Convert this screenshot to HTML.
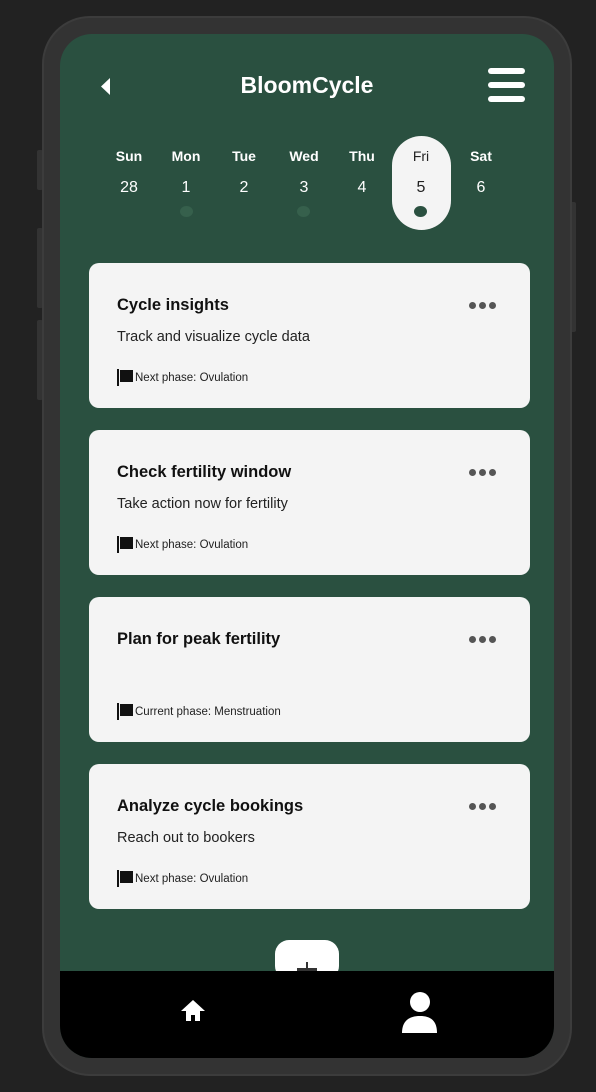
<!DOCTYPE html>
<html><head><meta charset="utf-8"><style>
*{margin:0;padding:0;box-sizing:border-box}
body{width:596px;height:1092px;background:#222;position:relative;overflow:hidden;font-family:"Liberation Sans",sans-serif}
.abs{position:absolute}
.frame{left:42px;top:16px;width:530px;height:1060px;background:#333;border-radius:48px;border:2px solid #3c3c3c}
.btn{background:#333}
.screen{left:60px;top:34px;width:494px;height:1024px;background:#2a5040;border-radius:32px;overflow:hidden}
.title{left:0;width:494px;top:38px;text-align:center;color:#fff;font-weight:bold;font-size:23px}
.day{width:60px;text-align:center;color:#fff;}
.day .l{position:absolute;top:114px;width:60px;font-size:14px;font-weight:bold}
.day .n{position:absolute;top:145px;width:60px;font-size:16px}
.dot{width:13px;height:11px;border-radius:50%;background:#36604c}
.card{left:29px;width:441px;height:145px;background:#f4f4f4;border-radius:10px}
.card h3{position:absolute;left:28px;top:33px;font-size:16.5px;font-weight:bold;color:#111}
.card p{position:absolute;left:28px;top:66px;font-size:14.5px;color:#222}
.card .f{position:absolute;left:28px;top:106px;font-size:11.5px;color:#222;display:flex;align-items:center}
.card .f svg{margin-right:2px}
.card .m{position:absolute;right:34px;top:39px;display:flex;gap:3px}
.card .m i{width:7px;height:7px;border-radius:50%;background:#555;display:block}
</style></head><body>
<div class="abs btn" style="left:37px;top:150px;width:6px;height:40px;border-radius:2px"></div>
<div class="abs btn" style="left:37px;top:228px;width:6px;height:80px;border-radius:2px"></div>
<div class="abs btn" style="left:37px;top:320px;width:6px;height:80px;border-radius:2px"></div>
<div class="abs btn" style="left:570px;top:202px;width:6px;height:130px;border-radius:2px"></div>
<div class="abs frame"></div>
<div class="abs screen">
 <svg class="abs" style="left:41px;top:44px" width="10" height="17"><path d="M9 0V17L0 8.5Z" fill="#fff"/></svg>
 <div class="abs title">BloomCycle</div>
 <div class="abs" style="left:428px;top:34px;width:37px;height:6px;background:#fff;border-radius:3px"></div>
 <div class="abs" style="left:428px;top:48px;width:37px;height:6px;background:#fff;border-radius:3px"></div>
 <div class="abs" style="left:428px;top:62px;width:37px;height:6px;background:#fff;border-radius:3px"></div>
 <div class="abs" style="left:332px;top:102px;width:59px;height:94px;background:#f4f4f4;border-radius:30px"></div>
 <div class="abs day" style="left:39px"><div class="l">Sun</div><div class="n">28</div></div>
 <div class="abs day" style="left:96px"><div class="l">Mon</div><div class="n">1</div></div>
 <div class="abs day" style="left:154px"><div class="l">Tue</div><div class="n">2</div></div>
 <div class="abs day" style="left:214px"><div class="l">Wed</div><div class="n">3</div></div>
 <div class="abs day" style="left:272px"><div class="l">Thu</div><div class="n">4</div></div>
 <div class="abs day" style="left:331px;color:#222"><div class="l" style="font-weight:normal">Fri</div><div class="n">5</div></div>
 <div class="abs day" style="left:391px"><div class="l">Sat</div><div class="n">6</div></div>
 <div class="abs dot" style="left:120px;top:172px"></div>
 <div class="abs dot" style="left:237px;top:172px"></div>
 <div class="abs dot" style="left:354px;top:172px;background:#2a5040"></div>

 <div class="abs card" style="top:229px"><h3>Cycle insights</h3><p>Track and visualize cycle data</p><div class="f"><svg width="16" height="17"><path d="M0 0H2V17H0ZM3 1H16V13H3Z" fill="#111"/></svg>Next phase: Ovulation</div><div class="m"><i></i><i></i><i></i></div></div>
 <div class="abs card" style="top:396px"><h3>Check fertility window</h3><p>Take action now for fertility</p><div class="f"><svg width="16" height="17"><path d="M0 0H2V17H0ZM3 1H16V13H3Z" fill="#111"/></svg>Next phase: Ovulation</div><div class="m"><i></i><i></i><i></i></div></div>
 <div class="abs card" style="top:563px"><h3>Plan for peak fertility</h3><div class="f"><svg width="16" height="17"><path d="M0 0H2V17H0ZM3 1H16V13H3Z" fill="#111"/></svg>Current phase: Menstruation</div><div class="m"><i></i><i></i><i></i></div></div>
 <div class="abs card" style="top:730px"><h3>Analyze cycle bookings</h3><p>Reach out to bookers</p><div class="f"><svg width="16" height="17"><path d="M0 0H2V17H0ZM3 1H16V13H3Z" fill="#111"/></svg>Next phase: Ovulation</div><div class="m"><i></i><i></i><i></i></div></div>

 <div class="abs" style="left:215px;top:906px;width:64px;height:40px;background:#fff;border-radius:14px"></div>
 <div class="abs" style="left:246px;top:928px;width:2px;height:10px;background:#333"></div>
 <div class="abs" style="left:237px;top:934px;width:20px;height:3px;background:#333"></div>
 <div class="abs" style="left:0;top:937px;width:494px;height:87px;background:#000"></div>
 <svg class="abs" style="left:120px;top:965px" width="26" height="23"><path d="M13 1L1 12H6V22H11V16H15V22H20V12H25Z" fill="#fff"/></svg>
 <svg class="abs" style="left:341px;top:958px" width="37" height="42"><circle cx="19" cy="10" r="10" fill="#fff"/><path d="M1 41C1 29 8 24 19 24C30 24 36 29 36 41Z" fill="#fff"/></svg>
</div>
</body></html>
